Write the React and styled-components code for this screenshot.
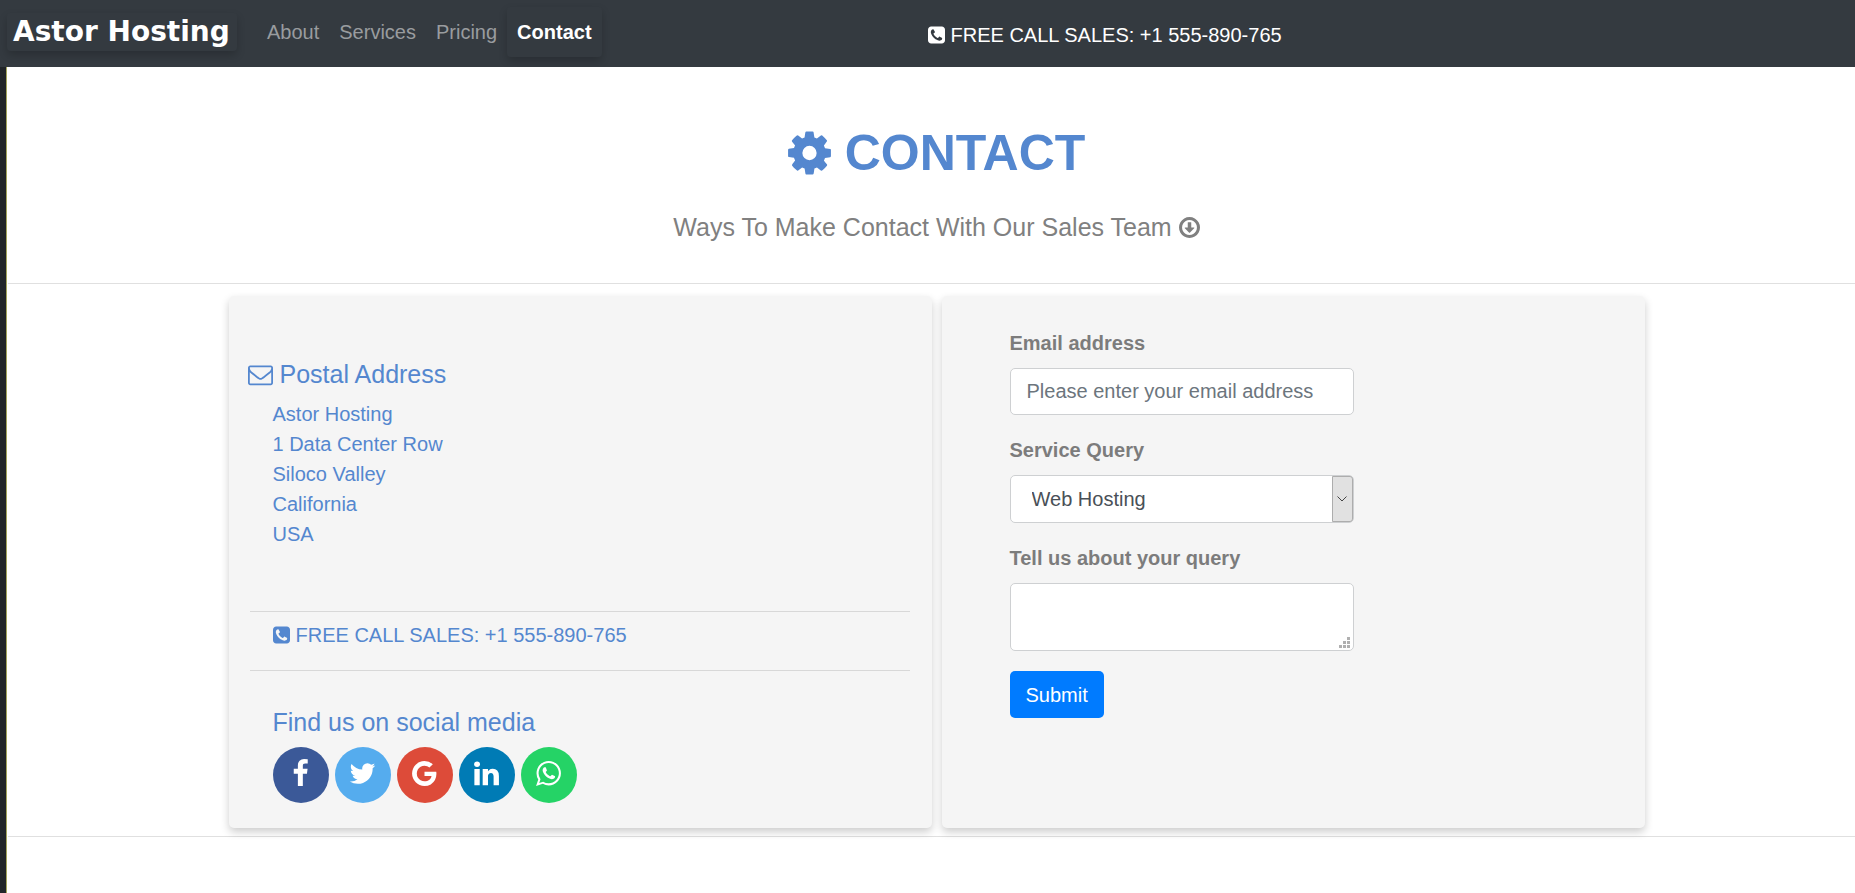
import React from 'react';
import styled, { createGlobalStyle } from 'styled-components';

const GlobalStyle = createGlobalStyle`
  *, *::before, *::after { box-sizing: border-box; }
  body {
    margin: 0;
    background: #212529;
    color: #808080;
    font-family: "Liberation Sans", Arial, sans-serif;
    font-size: 20px;
    line-height: 30px;
  }
  a { color: inherit; text-decoration: none; }
`;

const BLUE = '#5487cf';

const ICONS = {
  cog: 'M1152 896q0-106-75-181t-181-75-181 75-75 181 75 181 181 75 181-75 75-181zm512-109v222q0 12-8 23t-20 13l-185 28q-19 54-39 91 35 50 107 138 10 12 10 25t-9 23q-27 37-99 108t-94 71q-12 0-26-9l-138-108q-44 23-91 38-16 136-29 186-7 28-36 28h-222q-14 0-24.500-8.500t-11.500-21.500l-28-184q-49-16-90-37l-141 107q-10 9-25 9-14 0-25-11-126-114-165-168-7-10-7-23 0-12 8-23 15-21 51-66.500t54-70.500q-27-50-41-99l-183-27q-13-2-21-12.500t-8-23.500v-222q0-12 8-23t19-13l186-28q14-46 39-92-40-57-107-138-10-12-10-24 0-10 9-23 26-36 98.500-107.500t94.500-71.500q13 0 26 10l138 107q44-23 91-38 16-136 29-186 7-28 36-28h222q14 0 24.500 8.500t11.500 21.500l28 184q49 16 90 37l142-107q9-9 24-9 13 0 25 10 129 119 165 170 7 8 7 22 0 12-8 23-15 21-51 66.500t-54 70.500q26 50 41 98l183 28q13 2 21 12.500t8 23.500z',
  down: 'M1248 928q0 12-10 24l-319 319q-9 9-23 9t-23-9l-320-320q-15-16-7-35 8-20 30-20h192v-352q0-14 9-23t23-9h192q14 0 23 9t9 23v352h192q14 0 23 9t9 23zm-352-576q-148 0-273 73t-198 198-73 273 73 273 198 198 273 73 273-73 198-198 73-273-73-273-198-198-273-73zm768 544q0 209-103 385.500t-279.500 279.500-385.500 103-385.500-103-279.500-279.500-103-385.500 103-385.500 279.500-279.500 385.500-103 385.500 103 279.500 279.500 103 385.500z',
  phone: 'M1408 1193q0-11-2-16-3-8-38.500-29.500t-88.500-49.500l-53-29q-5-3-19-13t-25-15-21-5q-18 0-47 32.500t-57 65.500-44 33q-7 0-16.500-3.500t-15.500-6.500-17-9.500-14-8.500q-99-55-170.500-126.500t-126.500-170.500q-2-3-8.500-14t-9.500-17-6.500-15.500-3.500-16.500q0-13 20.500-33.500t45-38.500 45-39.500 20.500-36.500q0-10-5-21t-15-25-13-19q-3-6-15-28.500t-25-45.500-26.500-47.500-25-40.500-16.500-18-16-2q-48 0-101 22-46 21-80 94.500t-34 130.500q0 16 2.500 34t5 30.500 9 33 10 29.500 12.500 33 11 30q60 164 216.500 320.500t320.500 216.500q6 2 30 11t33 12.500 29.500 10 33 9 30.500 5 34 2.500q57 0 130.500-34t94.500-80q22-53 22-101zm256-777v960q0 119-84.500 203.500t-203.500 84.500h-960q-119 0-203.500-84.500t-84.500-203.500v-960q0-119 84.500-203.500t203.500-84.500h960q119 0 203.500 84.500t84.500 203.500z',
  envelope: 'M1664 1504v-768q-32 36-69 66-268 206-426 338-51 43-83 67t-86.500 48.500-102.500 24.500h-2q-48 0-102.500-24.500t-86.500-48.500-83-67q-158-132-426-338-37-30-69-66v768q0 13 9.500 22.500t22.500 9.500h1472q13 0 22.500-9.500t9.500-22.500zm0-1051v-24.500l-.5-13-3-12.500-5.500-9-9-7.500-14-2.500h-1472q-13 0-22.500 9.500t-9.500 22.500q0 168 147 284 193 152 401 317 6 5 35 29.500t46 37.500 44.500 31.500 50.500 27.500 43 9h2q20 0 43-9t50.500-27.500 44.500-31.500 46-37.500 35-29.500q208-165 401-317 54-43 100.500-115.500t46.500-131.500zm128-37v1088q0 66-47 113t-113 47h-1472q-66 0-113-47t-47-113v-1088q0-66 47-113t113-47h1472q66 0 113 47t47 113z',
  facebook: 'M1343 12v264h-157q-86 0-116 36t-30 108v189h293l-39 296h-254v759h-306v-759h-255v-296h255v-218q0-186 104-288.500t277-102.500q147 0 228 12z',
  twitter: 'M1684 408q-67 98-162 167 1 14 1 42 0 130-38 259.500t-115.500 248.500-184.500 210.500-258 146-323 54.500q-271 0-496-145 35 4 78 4 225 0 401-138-105-2-188-64.500t-114-159.500q33 5 61 5 43 0 85-11-112-23-185.500-111.500t-73.500-205.500v-4q68 38 146 41-66-44-105-115t-39-154q0-88 44-163 121 149 294.500 238.500t371.500 99.500q-8-38-8-74 0-134 94.500-228.500t228.500-94.500q140 0 236 102 109-21 205-78-37 115-142 178 93-10 186-50z',
  google: 'M896 786h725q12 67 12 128 0 217-91 387.500t-259.500 266.500-386.500 96q-157 0-299-60.500t-245-163.500-163.500-245-60.500-299 60.500-299 163.500-245 245-163.500 299-60.500q300 0 515 201l-209 201q-123-119-306-119-129 0-238.500 65t-173.500 176.500-64 243.500 64 243.500 173.500 176.500 238.500 65q87 0 160-24t120-60 82-82 51.500-87 22.500-78h-436v-264z',
  linkedin: 'M477 625v991h-330v-991h330zm21-306q1 73-50.500 122t-135.500 49h-2q-82 0-132-49t-50-122q0-74 51.500-122.500t134.500-48.500 133 48.500 51 122.500zm1166 729v568h-329v-530q0-105-40.500-164.500t-126.500-59.500q-63 0-105.500 34.500t-63.500 85.500q-11 30-11 81v553h-329q2-399 2-647t-1-296l-1-48h329v144h-2q20-32 41-56t56.500-52 87-43.500 114.500-15.500q171 0 275 113.500t104 332.500z',
  whatsapp: 'M1113 974q13 0 97.500 44t89.500 53q2 5 2 15 0 33-17 76-16 39-71 65.500t-102 26.500q-57 0-190-62-98-45-170-118t-148-185q-72-107-71-194v-8q3-91 74-158 24-22 52-22 6 0 18 1.500t19 1.500q19 0 26.500 6.500t15.500 27.500q8 20 33 88t25 75q0 21-34.500 57.500t-34.500 46.500q0 7 5 15 34 73 102 137 56 53 151 101 12 7 22 7 15 0 54-48.500t52-48.500zm-203 530q127 0 243.500-50t200.500-134 134-200.500 50-243.500-50-243.500-134-200.500-200.500-134-243.500-50-243.500 50-200.500 134-134 200.500-50 243.500q0 203 120 368l-79 233 242-77q158 104 345 104zm0-1382q153 0 292.500 60t240.500 161 161 240.500 60 292.500-60 292.500-161 240.500-240.500 161-292.500 60q-195 0-365-94l-417 134 136-405q-108-178-108-389 0-153 60-292.500t161-240.500 240.500-161 292.500-60z',
};

/* Most glyphs fill the middle 1536 units; wide ones use the full 1792. */
const Glyph = styled.svg`
  flex: none;
  display: block;
  fill: currentColor;
`;

function Icon({ name, size, wide }) {
  return (
    <Glyph
      height={size}
      width={wide ? size : Math.round((size * 6) / 7)}
      viewBox={wide ? '0 0 1792 1792' : '128 0 1536 1792'}
      aria-hidden="true"
    >
      <path d={ICONS[name]} />
    </Glyph>
  );
}

const Page = styled.div`
  min-height: 100vh;
  display: flex;
  flex-direction: column;
`;

const Header = styled.header`
  display: grid;
  grid-template-columns: 1fr 1fr;
  align-items: start;
  min-height: 67px;
  padding-top: 7px;
  background: #343a40;
  color: #fff;
`;

const NavBar = styled.nav`
  display: flex;
  align-items: flex-start;
  padding-left: 7px;
`;

const Brand = styled.a`
  width: 230px;
  margin: 6px 20px 0 0;
  padding: 4px 0 4px 6px;
  border-radius: 4px;
  box-shadow: 0 4px 8px rgba(0, 0, 0, 0.2);
  font: 700 28px/30px "DejaVu Sans", Verdana, sans-serif;
  white-space: nowrap;
`;

const NavLink = styled.a`
  padding: 10px;
  border-radius: 4px;
  color: ${(p) => (p.$active ? '#fff' : '#999c9f')};
  font-weight: ${(p) => (p.$active ? 700 : 400)};
  box-shadow: ${(p) => (p.$active ? '0 4px 8px rgba(0, 0, 0, 0.2)' : 'none')};
`;

const PhoneLine = styled.a`
  display: flex;
  align-items: center;
  gap: 6px;
`;

const HeaderPhone = styled(PhoneLine)`
  margin-top: 13px;
`;

const Main = styled.main`
  flex: 1;
  margin-left: 6px;
  padding-left: 1px;
  border-left: 1px solid #a3a45c;
  background: #fff;
`;

const Hero = styled.section`
  padding: 56px 0 41px 10px;
  border-bottom: 1px solid #e0e0e0;
`;

const Title = styled.h1`
  display: flex;
  justify-content: center;
  align-items: center;
  gap: 14px;
  margin: 0 0 29px;
  color: ${BLUE};
  font-size: 50px;
  line-height: 60px;
`;

const Subtitle = styled.p`
  display: flex;
  justify-content: center;
  align-items: center;
  gap: 7px;
  margin: 0;
  font-size: 25px;
`;

const Panels = styled.section`
  padding: 12px 0 8px 10px;
  border-bottom: 1px solid #e0e0e0;
`;

const PanelRow = styled.div`
  display: grid;
  grid-template-columns: 1fr 1fr;
  gap: 10px;
  max-width: 1416px;
  margin: 0 auto;
`;

const Card = styled.div`
  min-height: 532px;
  border-radius: 5px;
  background: #f5f5f5;
  box-shadow: 0 4px 8px rgba(0, 0, 0, 0.2);
`;

const InfoCard = styled(Card)`
  padding: 63px 22px 24px 21px;
  color: ${BLUE};
`;

const Heading = styled.h2`
  display: flex;
  align-items: center;
  gap: 7px;
  margin: 0 0 10px;
  font-size: 25px;
  font-weight: 400;
`;

const PostalHeading = styled(Heading)`
  margin-left: -2px;
`;

const Address = styled.address`
  display: flex;
  flex-direction: column;
  padding-left: 23px;
  font-style: normal;
`;

const CallRow = styled.div`
  margin: 62px 0 36px;
  padding: 8px 0 20px 23px;
  border: solid #d8d8d8;
  border-width: 1px 0;
`;

const Social = styled.div`
  padding-left: 23px;
`;

const SocialList = styled.div`
  display: flex;
  gap: 6px;
`;

const SocialLink = styled.a`
  display: flex;
  align-items: center;
  justify-content: center;
  width: 56px;
  height: 56px;
  padding-bottom: 4px;
  border-radius: 50%;
  background: ${(p) => p.$color};
  color: #fff;
`;

const FormCard = styled(Card)`
  padding: 32px 68px;
`;

const Form = styled.form`
  display: flex;
  flex-direction: column;
  align-items: flex-start;
  gap: 20px;
  max-width: 344px;
`;

const Field = styled.div`
  width: 100%;
  display: flex;
  flex-direction: column;
  gap: 10px;
`;

const Label = styled.label`
  font-weight: 700;
  color: #7c7c7c;
`;

const Control = styled.input`
  display: block;
  width: 100%;
  height: 47px;
  padding: 0 16px;
  border: 1px solid #ced0d2;
  border-radius: 5px;
  background: #fff;
  color: #495057;
  font: inherit;
  &::placeholder { color: #6c757d; opacity: 1; }
`;

const SelectControl = styled(Control).attrs({ as: 'select' })`
  appearance: none;
  height: 48px;
  padding: 0 30px 0 21px;
`;

const TextControl = styled(Control).attrs({ as: 'textarea' })`
  height: 68px;
  padding: 8px 16px;
  resize: none;
`;

const Overlaid = styled.div`
  position: relative;
`;

const SelectArrow = styled.span`
  position: absolute;
  top: 1px;
  right: 1px;
  bottom: 1px;
  width: 21px;
  display: flex;
  align-items: center;
  justify-content: center;
  border: 1px solid #adadad;
  border-radius: 0 3px 3px 0;
  background: #e1e1e1;
  pointer-events: none;
`;

const Grip = styled.svg`
  position: absolute;
  right: 4px;
  bottom: 3px;
  fill: #b0b0b0;
  pointer-events: none;
`;

const Submit = styled.button`
  height: 47px;
  padding: 0 16px;
  border: 0;
  border-radius: 5px;
  background: #007bff;
  color: #fff;
  font: inherit;
`;

const NAV = ['About', 'Services', 'Pricing', 'Contact'];
const ADDRESS = ['Astor Hosting', '1 Data Center Row', 'Siloco Valley', 'California', 'USA'];
const SOCIAL = [
  { name: 'facebook', color: '#3b5998' },
  { name: 'twitter', color: '#55acee' },
  { name: 'google', color: '#dd4b39' },
  { name: 'linkedin', color: '#007bb5' },
  { name: 'whatsapp', color: '#25d366' },
];
const GRIP_DOTS = [[8, 0], [4, 4], [8, 4], [0, 8], [4, 8], [8, 8]];

export default function App() {
  return (
    <Page>
      <GlobalStyle />
      <Header>
        <NavBar>
          <Brand href="#">Astor Hosting</Brand>
          {NAV.map((item) => (
            <NavLink key={item} href="#" $active={item === 'Contact'}>{item}</NavLink>
          ))}
        </NavBar>
        <HeaderPhone href="#">
          <Icon name="phone" size={20} />
          FREE CALL SALES: +1 555-890-765
        </HeaderPhone>
      </Header>
      <Main>
        <Hero>
          <Title><Icon name="cog" size={50} />CONTACT</Title>
          <Subtitle>Ways To Make Contact With Our Sales Team<Icon name="down" size={25} /></Subtitle>
        </Hero>
        <Panels>
          <PanelRow>
            <InfoCard>
              <PostalHeading><Icon name="envelope" size={25} wide />Postal Address</PostalHeading>
              <Address>
                {ADDRESS.map((line) => <span key={line}>{line}</span>)}
              </Address>
              <CallRow>
                <PhoneLine href="#">
                  <Icon name="phone" size={20} />
                  FREE CALL SALES: +1 555-890-765
                </PhoneLine>
              </CallRow>
              <Social>
                <Heading>Find us on social media</Heading>
                <SocialList>
                  {SOCIAL.map((s) => (
                    <SocialLink key={s.name} href="#" aria-label={s.name} $color={s.color}>
                      <Icon name={s.name} size={29} wide />
                    </SocialLink>
                  ))}
                </SocialList>
              </Social>
            </InfoCard>
            <FormCard>
              <Form onSubmit={(e) => e.preventDefault()}>
                <Field>
                  <Label htmlFor="email">Email address</Label>
                  <Control id="email" type="email" placeholder="Please enter your email address" />
                </Field>
                <Field>
                  <Label htmlFor="service">Service Query</Label>
                  <Overlaid>
                    <SelectControl id="service">
                      <option>Web Hosting</option>
                    </SelectControl>
                    <SelectArrow>
                      <svg width="10" height="6" viewBox="0 0 10 6" fill="none" stroke="#444" aria-hidden="true">
                        <path d="M0.500 0.500L5 5L9.500 0.500" />
                      </svg>
                    </SelectArrow>
                  </Overlaid>
                </Field>
                <Field>
                  <Label htmlFor="query">Tell us about your query</Label>
                  <Overlaid>
                    <TextControl id="query" />
                    <Grip width="11" height="11" viewBox="0 0 11 11" aria-hidden="true">
                      {GRIP_DOTS.map(([x, y]) => (
                        <rect key={`${x}-${y}`} x={x} y={y} width="3" height="3" />
                      ))}
                    </Grip>
                  </Overlaid>
                </Field>
                <Submit type="submit">Submit</Submit>
              </Form>
            </FormCard>
          </PanelRow>
        </Panels>
      </Main>
    </Page>
  );
}
